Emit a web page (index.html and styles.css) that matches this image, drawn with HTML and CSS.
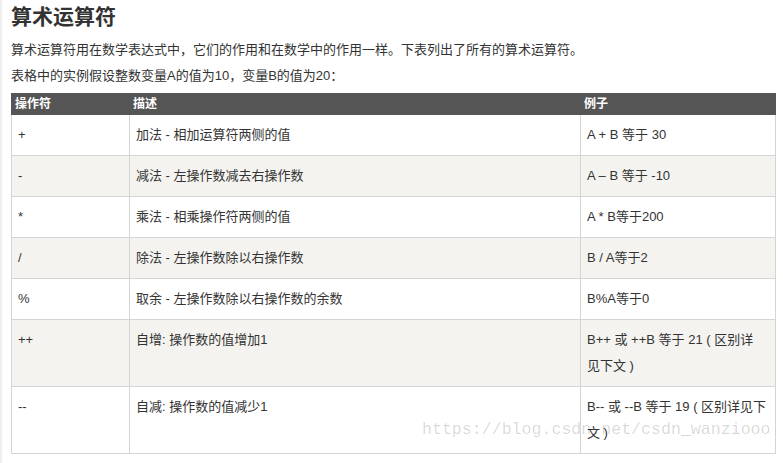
FILE: index.html
```html
<!DOCTYPE html>
<html lang="zh-CN">
<head>
<meta charset="utf-8">
<title>算术运算符</title>
<link rel="stylesheet" href="styles.css">
</head>
<body>
<div class="page">
  <h2 class="title">算术运算符</h2>
  <p class="text first">算术运算符用在数学表达式中，它们的作用和在数学中的作用一样。下表列出了所有的算术运算符。</p>
  <p class="text">表格中的实例假设整数变量A的值为10，变量B的值为20：</p>
  <div class="table-wrap">
    <table class="ops">
      <colgroup>
        <col class="c1">
        <col class="c2">
        <col class="c3">
      </colgroup>
      <thead>
        <tr><th>操作符</th><th>描述</th><th>例子</th></tr>
      </thead>
      <tbody>
        <tr><td>+</td><td>加法 - 相加运算符两侧的值</td><td>A + B 等于 30</td></tr>
        <tr class="alt"><td>-</td><td>减法 - 左操作数减去右操作数</td><td>A – B 等于 -10</td></tr>
        <tr><td>*</td><td>乘法 - 相乘操作符两侧的值</td><td>A * B等于200</td></tr>
        <tr class="alt"><td>/</td><td>除法 - 左操作数除以右操作数</td><td>B / A等于2</td></tr>
        <tr><td>%</td><td>取余 - 左操作数除以右操作数的余数</td><td>B%A等于0</td></tr>
        <tr class="alt"><td>++</td><td>自增: 操作数的值增加1</td><td>B++ 或 ++B 等于 21 ( 区别详<br>见下文 )</td></tr>
        <tr><td>--</td><td>自减: 操作数的值减少1</td><td>B-- 或 --B 等于 19 ( 区别详见下<br>文 )</td></tr>
      </tbody>
    </table>
    <div class="watermark">https://blog.csdn.net/csdn_wanziooo</div>
  </div>
</div>
</body>
</html>
```

FILE: styles.css
```css
html, body {
  margin: 0;
  padding: 0;
  background: #fff;
}

body {
  font-family: "Liberation Sans", "Noto Sans CJK SC", sans-serif;
  color: #333;
}

.page {
  border-left: 2px solid #efefef;
  padding: 2px 8px 0 9px;
  min-height: 461px;
}

.title {
  margin: 0;
  font-size: 21px;
  line-height: 30px;
  font-weight: bold;
  color: #333;
}

.text {
  margin: 0;
  font-size: 13px;
  line-height: 26px;
}

.text.first {
  margin-top: 5px;
}

.table-wrap {
  position: relative;
  margin-top: 4px;
}

.ops {
  width: 764px;
  table-layout: fixed;
  border-collapse: collapse;
  font-size: 13px;
}

.c1 { width: 118px; }
.c2 { width: 451px; }
.c3 { width: 195px; }

.ops th {
  background: #555;
  color: #fff;
  font-size: 12px;
  font-weight: bold;
  text-align: left;
  line-height: 20px;
  padding: 0 3px;
  border: 1px solid #555;
}

.ops td {
  border: 1px solid #d4d4d4;
  padding: 7px 6px;
  line-height: 26px;
  vertical-align: top;
  color: #333;
}

.ops tr.alt td {
  background: #f4f3f0;
}

.watermark {
  position: absolute;
  left: 411px;
  top: 327px;
  font-family: "Liberation Mono", monospace;
  font-size: 16.6px;
  line-height: 20px;
  color: rgba(0, 0, 0, 0.16);
  white-space: nowrap;
  pointer-events: none;
}
```
